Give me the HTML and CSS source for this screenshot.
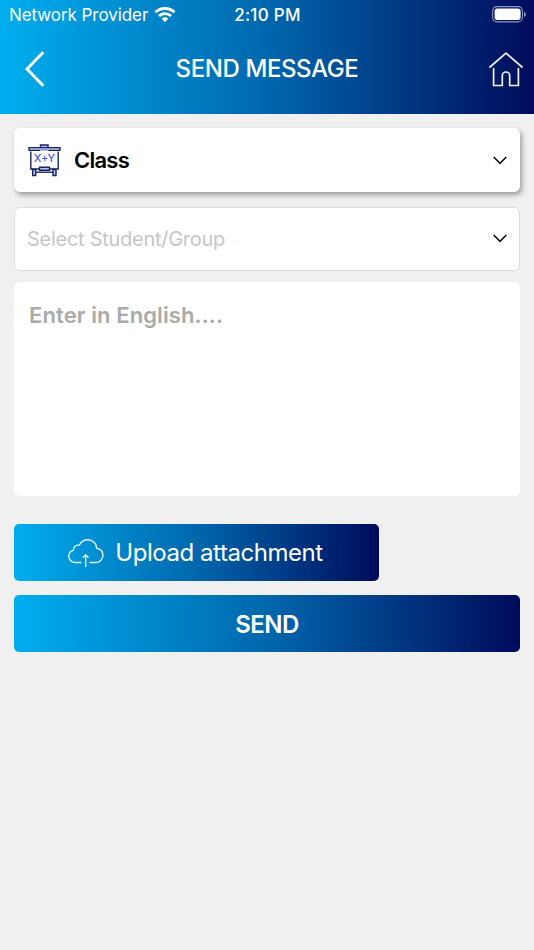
FILE: index.html
```
<!DOCTYPE html>
<html lang="en">
<head>
    <meta charset="UTF-8">
    <meta name="viewport" content="width=device-width, initial-scale=1.0">
    <title>Send Message</title>
    <link rel="stylesheet" href="styles.css">
</head>
<body>

    <header class="header">
        <div class="status-bar">
            <div class="carrier">
                <span class="carrier-name">Network Provider</span>
                <svg class="wifi" width="22" height="16" viewBox="0 0 22 16" fill="#fff">
                    <path d="M11 0C6.900 0 3.200 1.600.5 4.200l1.900 2A12.400 12.400 0 0 1 11 2.900c3.300 0 6.300 1.300 8.600 3.300l1.900-2A15.100 15.100 0 0 0 11 0z"/>
                    <path d="M11 5.200c-2.700 0-5.200 1.100-7 2.800l2 2a7.300 7.300 0 0 1 10 0l2-2a10.100 10.100 0 0 0-7-2.800z"/>
                    <path d="M11 10.200c-1.300 0-2.500.500-3.400 1.300L11 15.200l3.400-3.700a5 5 0 0 0-3.400-1.300z"/>
                </svg>
            </div>
            <span class="time">2:10 PM</span>
            <svg class="battery" width="34" height="17" viewBox="0 0 34 17">
                <rect x=".6" y=".6" width="29.800" height="15.300" rx="4.500" fill="none" stroke="#8d9ac4" stroke-width="1.100"/>
                <rect x="2.600" y="2.600" width="26" height="11.300" rx="2.600" fill="#fff"/>
                <path d="M32 6v5c1.300-.5 1.900-1.400 1.900-2.500S33.300 6.500 32 6z" fill="#8d9ac4"/>
            </svg>
        </div>
        <div class="nav-bar">
            <a href="#" class="nav-link back-link" aria-label="Back">
                <svg width="20" height="36" viewBox="0 0 20 36" fill="none" stroke="#fff" stroke-width="3">
                    <path d="M18.300 1.200L2 18l16.300 16.700"/>
                </svg>
            </a>
            <h1 class="title">SEND MESSAGE</h1>
            <a href="#" class="nav-link home-link" aria-label="Home">
                <svg width="34" height="35" viewBox="0 0 34 35" fill="none" stroke="#f0f3ff" stroke-width="1.700" stroke-linecap="round" stroke-linejoin="round">
                    <path d="M1 15L17 1.200 33 15"/>
                    <path d="M4.600 16.500v17h8.700V23.700a3.700 3.700 0 0 1 7.400 0v9.800h8.700v-17"/>
                </svg>
            </a>
        </div>
    </header>

    <form class="message-form">
        <div class="select-box select-class">
            <svg class="board" width="33" height="33" viewBox="0 0 33 33" fill="#b9c6f2" stroke="#1b2560" stroke-width="1.400">
                <path d="M12.500 3.500V1h7.500v2.500"/>
                <path d="M2.800 7.500V25h27.400V7.500" fill="none"/>
                <path d="M1 3.600h31v2.800H1z"/>
                <path d="M12 7h8.500" stroke="#fff"/>
                <path d="M4.700 25.500h3v6h-3zM25 25.500h3v6h-3z"/>
                <path d="M7.700 28.200H25" fill="none"/>
                <path d="M11.500 23.300h10v2.900h-10z"/>
                <text class="board-text" x="16.500" y="18" text-anchor="middle">X+Y</text>
            </svg>
            <span class="class-label">Class</span>
            <svg class="arrow" width="14" height="9" viewBox="0 0 14 9" fill="none" stroke="#111" stroke-width="1.600">
                <path d="M.7 1l6.300 6.300L13.300 1"/>
            </svg>
        </div>

        <div class="select-box select-student">
            <span class="student-label">Select Student/Group</span>
            <svg class="arrow" width="14" height="9" viewBox="0 0 14 9" fill="none" stroke="#111" stroke-width="1.600">
                <path d="M.7 1l6.300 6.300L13.300 1"/>
            </svg>
        </div>

        <textarea class="message" placeholder="Enter in English...."></textarea>

        <button type="button" class="btn btn-upload">
            <svg class="cloud" width="36" height="28" viewBox="0 0 36 28" fill="none" stroke="#e4f6ff" stroke-width="1.400" stroke-linecap="round" stroke-linejoin="round">
                <path d="M13 23.500H7.300C3.600 23.500.8 20.800.8 17.300c0-3.200 2-5.300 4.500-6C5.500 8 8 5.800 11.400 6 13 2.700 16 .8 19.700.8c5 0 8.800 3.600 9 8.400 3.700.6 6.200 3.300 6.200 7 0 4.200-3.200 7.300-7.400 7.300H22"/>
                <path d="M17.700 27.400V16M15.300 18.200l2.400-2.400 2.400 2.400"/>
            </svg>
            <span class="upload-label">Upload attachment</span>
        </button>
        <button type="submit" class="btn btn-send">SEND</button>
    </form>

</body>
</html>
```
FILE: styles.css
```
body {
    font-family: Inter, "Liberation Sans", sans-serif;
    background-color: #f0f0f0;
    margin: 0;
}

.header {
    height: 114px;
    background: linear-gradient(to right, #00aeef, #0067ad 50%, #000b5b);
    color: white;
}

.status-bar {
    display: grid;
    grid-template-columns: 1fr auto 1fr;
    align-items: center;
    height: 30px;
    padding: 0 8px 0 9px;
    font-size: 17px;
}

.carrier {
    display: flex;
    align-items: center;
    gap: 6px;
}

.carrier-name {
    letter-spacing: -0.070px;
}

.time {
    font-weight: 500;
    letter-spacing: 0.300px;
}

.battery {
    justify-self: end;
    margin-bottom: 2px;
}

.nav-bar {
    display: grid;
    grid-template-columns: 1fr auto 1fr;
    align-items: center;
    height: 78px;
    padding: 0 11px;
}

.nav-link {
    display: flex;
}

.back-link {
    margin-left: 14px;
}

.home-link {
    justify-self: end;
}

.title {
    margin: 0 0 1px;
    font-size: 24px;
    font-weight: 550;
    letter-spacing: -0.400px;
}

.message-form {
    display: flex;
    flex-direction: column;
    padding: 14px 14px 0;
}

.select-box {
    display: flex;
    align-items: center;
    box-sizing: border-box;
    height: 64px;
    padding: 0 13px;
    background: white;
    border-radius: 6px;
}

.select-class {
    padding-left: 14px;
    box-shadow: 2px 3px 5px rgba(0, 0, 0, 0.35);
}

.board-text {
    font-size: 11px;
    font-weight: 500;
    fill: #3f5fd8;
    stroke: none;
}

.class-label {
    margin-left: 13px;
    font-size: 22px;
    font-weight: 600;
    letter-spacing: -0.750px;
}

.arrow {
    margin-left: auto;
}

.select-student {
    margin-top: 15px;
    padding: 0 12px;
    border: 1px solid #dcdcdc;
}

.student-label {
    font-size: 20px;
    letter-spacing: -0.270px;
    color: #c6c6c8;
}

.select-student .arrow {
    margin-bottom: 2px;
}

.message {
    box-sizing: border-box;
    height: 214px;
    margin: 11px 0 28px;
    padding: 18px 15px;
    border: none;
    border-radius: 6px;
    resize: none;
    font-family: inherit;
    font-size: 22px;
    font-weight: 600;
    letter-spacing: 0.100px;
    line-height: 30px;
}

.message::placeholder {
    color: #aaa;
}

.btn {
    display: flex;
    justify-content: center;
    align-items: center;
    height: 57px;
    padding: 0;
    border: none;
    border-radius: 5px;
    background: linear-gradient(to right, #00aeef, #0067ad 50%, #000b5b);
    color: white;
    font-family: inherit;
    font-size: 24px;
}

.btn-upload {
    width: 365px;
    gap: 11px;
    margin-bottom: 14px;
}

.cloud {
    margin-left: -2px;
}

.upload-label {
    letter-spacing: -0.450px;
}

.btn-send {
    padding-top: 1px;
    font-weight: 600;
    letter-spacing: -0.500px;
}
```
